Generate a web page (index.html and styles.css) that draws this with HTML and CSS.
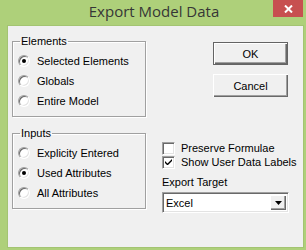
FILE: index.html
```html
<!DOCTYPE html>
<html lang="en">
<head>
    <meta charset="UTF-8">
    <meta name="viewport" content="width=device-width, initial-scale=1.0">
    <title>Export Model Data</title>
    <link rel="stylesheet" href="styles.css">
</head>
<body>
    <div class="window">
        <div class="titlebar">
            <div class="title">Export Model Data</div>
            <div class="close">
                <svg width="9" height="8" viewBox="0 0 9 8">
                    <path d="M1 0.5 L8 7.5 M8 0.5 L1 7.5" stroke="#ffffff" stroke-width="2" fill="none"/>
                </svg>
            </div>
        </div>

        <div class="client">
            <div class="left-col">
                <fieldset class="group">
                    <legend>Elements</legend>
                    <div class="radio-row"><span class="radio checked"></span>Selected Elements</div>
                    <div class="radio-row"><span class="radio"></span>Globals</div>
                    <div class="radio-row"><span class="radio"></span>Entire Model</div>
                </fieldset>

                <fieldset class="group second">
                    <legend>Inputs</legend>
                    <div class="radio-row"><span class="radio"></span>Explicity Entered</div>
                    <div class="radio-row"><span class="radio checked"></span>Used Attributes</div>
                    <div class="radio-row"><span class="radio"></span>All Attributes</div>
                </fieldset>
            </div>

            <div class="right-col">
                <button class="btn default">OK</button>
                <button class="btn">Cancel</button>

                <div class="checks">
                    <div class="check-row"><span class="checkbox"></span>Preserve Formulae</div>
                    <div class="check-row">
                        <span class="checkbox">
                            <svg width="7" height="7" viewBox="0 0 7 7">
                                <path d="M0 2 L0 4 L2 6 L3 6 L7 2 L7 0 L2.5 4.5 Z" fill="#000000"/>
                            </svg>
                        </span>Show User Data Labels
                    </div>
                </div>

                <div class="field-label">Export Target</div>
                <div class="combo">
                    <span class="combo-text">Excel</span>
                    <span class="combo-btn">
                        <svg width="7" height="4" viewBox="0 0 7 4">
                            <path d="M0 0 L7 0 L3.5 4 Z" fill="#000000"/>
                        </svg>
                    </span>
                </div>
            </div>
        </div>
    </div>
</body>
</html>
```

FILE: styles.css
```css
body {
    margin: 0;
    padding: 0;
    background-color: #aed07a;
    font-family: "Liberation Sans", Arial, sans-serif;
    font-size: 11px;
    color: #000000;
}

.window {
    width: 306px;
    height: 250px;
    background-color: #aed07a;
    display: flex;
    flex-direction: column;
}

.titlebar {
    position: relative;
    height: 26px;
    flex-shrink: 0;
}

.title {
    text-align: center;
    font-family: "Open Sans", "Noto Sans", sans-serif;
    font-size: 15px;
    line-height: 22px;
    color: #363636;
    padding-left: 2px;
}

.close {
    position: absolute;
    top: 0;
    right: 3px;
    width: 30px;
    height: 17px;
    background-color: #c75050;
    display: flex;
    align-items: center;
    justify-content: center;
}

.client {
    flex: 1;
    margin: 0 3px 3px 8px;
    background-color: #f0f0f0;
    box-shadow: 0 0 0 1px #a3c472;
    display: grid;
    grid-template-columns: 134px 127px;
    column-gap: 16px;
    padding: 8px 0 0 4px;
}

/* group boxes */

.group {
    margin: 0;
    padding: 3px 0 5px 5px;
    border: 1px solid #a0a0a0;
    box-shadow: 1px 1px 0 #ffffff, inset 1px 1px 0 #ffffff;
}

.group.second {
    margin-top: 9px;
}

.group legend {
    padding: 0 1px;
    margin-left: 2px;
    line-height: 14px;
}

.radio-row {
    display: flex;
    align-items: center;
    height: 20px;
    white-space: nowrap;
}

.radio {
    width: 12px;
    height: 12px;
    box-sizing: border-box;
    border-radius: 50%;
    border: 1px solid;
    border-color: #a0a0a0 #ffffff #ffffff #a0a0a0;
    box-shadow: inset 1px 1px 0 #696969, inset -1px -1px 0 #e3e3e3;
    background-color: #ffffff;
    margin-right: 7px;
    display: flex;
    align-items: center;
    justify-content: center;
    flex-shrink: 0;
}

.radio.checked::after {
    content: "";
    width: 4px;
    height: 4px;
    border-radius: 50%;
    background-color: #000000;
}

/* right side */

.right-col {
    display: flex;
    flex-direction: column;
    align-items: flex-start;
}

.btn {
    align-self: flex-end;
    margin-right: 1px;
    width: 75px;
    height: 23px;
    padding: 0;
    border: none;
    background-color: #f0f0f0;
    font-family: "Liberation Sans", Arial, sans-serif;
    font-size: 11px;
    color: #000000;
    box-shadow: inset 1px 1px 0 #ffffff, inset -1px -1px 0 #696969, inset -2px -2px 0 #a0a0a0;
    margin-top: 8px;
}

.btn.default {
    margin-top: 8px;
    box-shadow: inset 0 0 0 1px #646464, inset 2px 2px 0 #ffffff, inset -2px -2px 0 #696969, inset -3px -3px 0 #a0a0a0;
}

.btn + .btn {
    margin-top: 9px;
}

.checks {
    margin-top: 44px;
}

.check-row {
    display: flex;
    align-items: center;
    height: 14px;
    white-space: nowrap;
}

.checkbox {
    width: 13px;
    height: 13px;
    box-sizing: border-box;
    border: 1px solid;
    border-color: #a0a0a0 #ffffff #ffffff #a0a0a0;
    box-shadow: inset 1px 1px 0 #696969, inset -1px -1px 0 #e3e3e3;
    background-color: #ffffff;
    margin-right: 6px;
    display: flex;
    align-items: center;
    justify-content: center;
    flex-shrink: 0;
}

.field-label {
    margin-top: 7px;
    line-height: 13px;
}

.combo {
    margin-top: 3px;
    width: 127px;
    height: 21px;
    box-sizing: border-box;
    border: 1px solid;
    border-color: #a0a0a0 #ffffff #ffffff #a0a0a0;
    box-shadow: inset 1px 1px 0 #696969, inset -1px -1px 0 #e3e3e3;
    background-color: #ffffff;
    display: flex;
    align-items: center;
    justify-content: space-between;
    padding: 2px;
}

.combo-text {
    padding-left: 1px;
}

.combo-btn {
    width: 16px;
    height: 15px;
    background-color: #f0f0f0;
    box-shadow: inset 1px 1px 0 #ffffff, inset -1px -1px 0 #696969, inset -2px -2px 0 #a0a0a0;
    display: flex;
    align-items: center;
    justify-content: center;
}
```
